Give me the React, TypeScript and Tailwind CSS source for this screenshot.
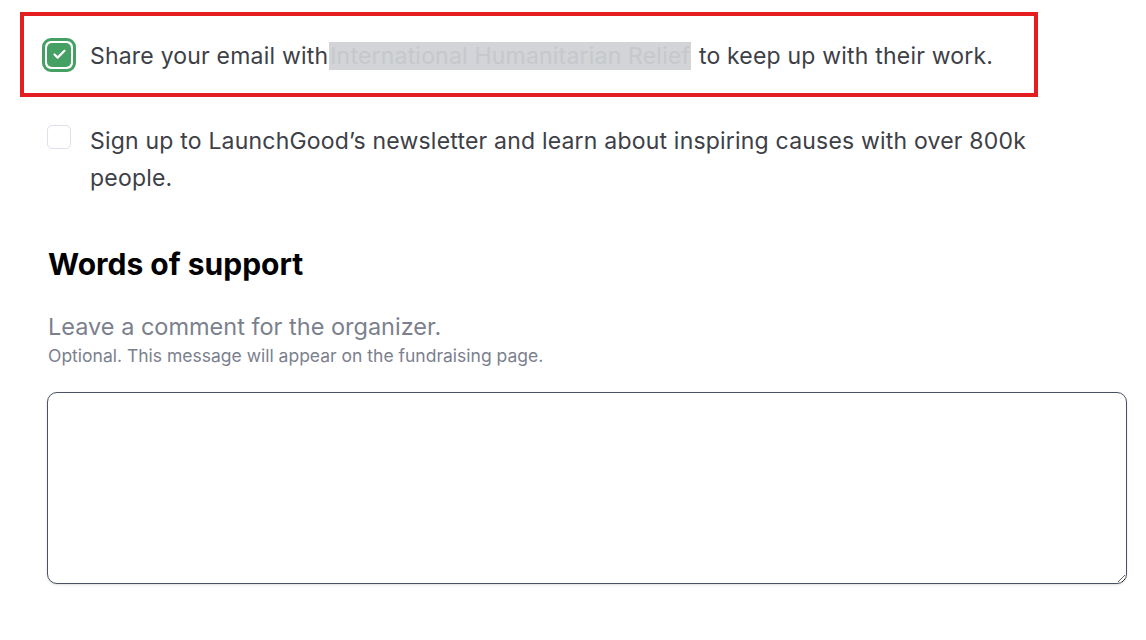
import { Check } from 'lucide-react';

const font = { fontFamily: 'Inter, "Noto Sans", sans-serif' };

function CheckedBox() {
  return (
    <div className="flex h-[34px] w-[34px] shrink-0 items-center justify-center rounded-[9px] border-[3px] border-[#45a063] bg-white">
      <div className="flex h-[24px] w-[24px] items-center justify-center rounded-[5px] bg-[#45a063]">
        <Check className="h-[15px] w-[15px] text-white" strokeWidth={3.5} />
      </div>
    </div>
  );
}

export default function App() {
  return (
    <div className="min-h-[640px] bg-white pl-[20px] pt-[12px] text-[#3d4047]" style={font}>
      <div className="flex h-[85px] w-[1018px] items-center border-4 border-[#e41e20] pl-[18px]">
        <CheckedBox />
        <p className="ml-[14px] pt-[3px] text-[23px] leading-[36px] tracking-[0.2px]">
          Share your email with
          <span className="mx-[1px] bg-[#d2d4d7] px-[1px] text-[#c6c8cb]">International Humanitarian Relief</span>
          {' '}to keep up with their work.
        </p>
      </div>

      <div className="mt-[25px] flex items-start pl-[27px]">
        <div className="mt-[3px] h-[24px] w-[24px] shrink-0 rounded-[5px] border border-[#dde1ea] bg-white" />
        <p className="ml-[19px] w-[960px] pt-[1px] text-[23px] leading-[37px] tracking-[0.2px]">
          Sign up to LaunchGood’s newsletter and learn about inspiring causes with over 800k people.
        </p>
      </div>

      <div className="pl-[28px]">
        <h2 className="mt-[47px] text-[30px] font-bold leading-[40px] text-black">Words of support</h2>
        <p className="mt-[27px] text-[23.5px] leading-[32px] text-[#7b808e]">
          Leave a comment for the organizer.
        </p>
        <p className="text-[17.5px] leading-[26px] text-[#7b808e]">
          Optional. This message will appear on the fundraising page.
        </p>
        <textarea
          className="mt-[23px] block h-[192px] w-[1080px] -translate-x-[1px] rounded-[10px] border border-[#4b5261] bg-white shadow-sm outline-none"
        />
      </div>
    </div>
  );
}
